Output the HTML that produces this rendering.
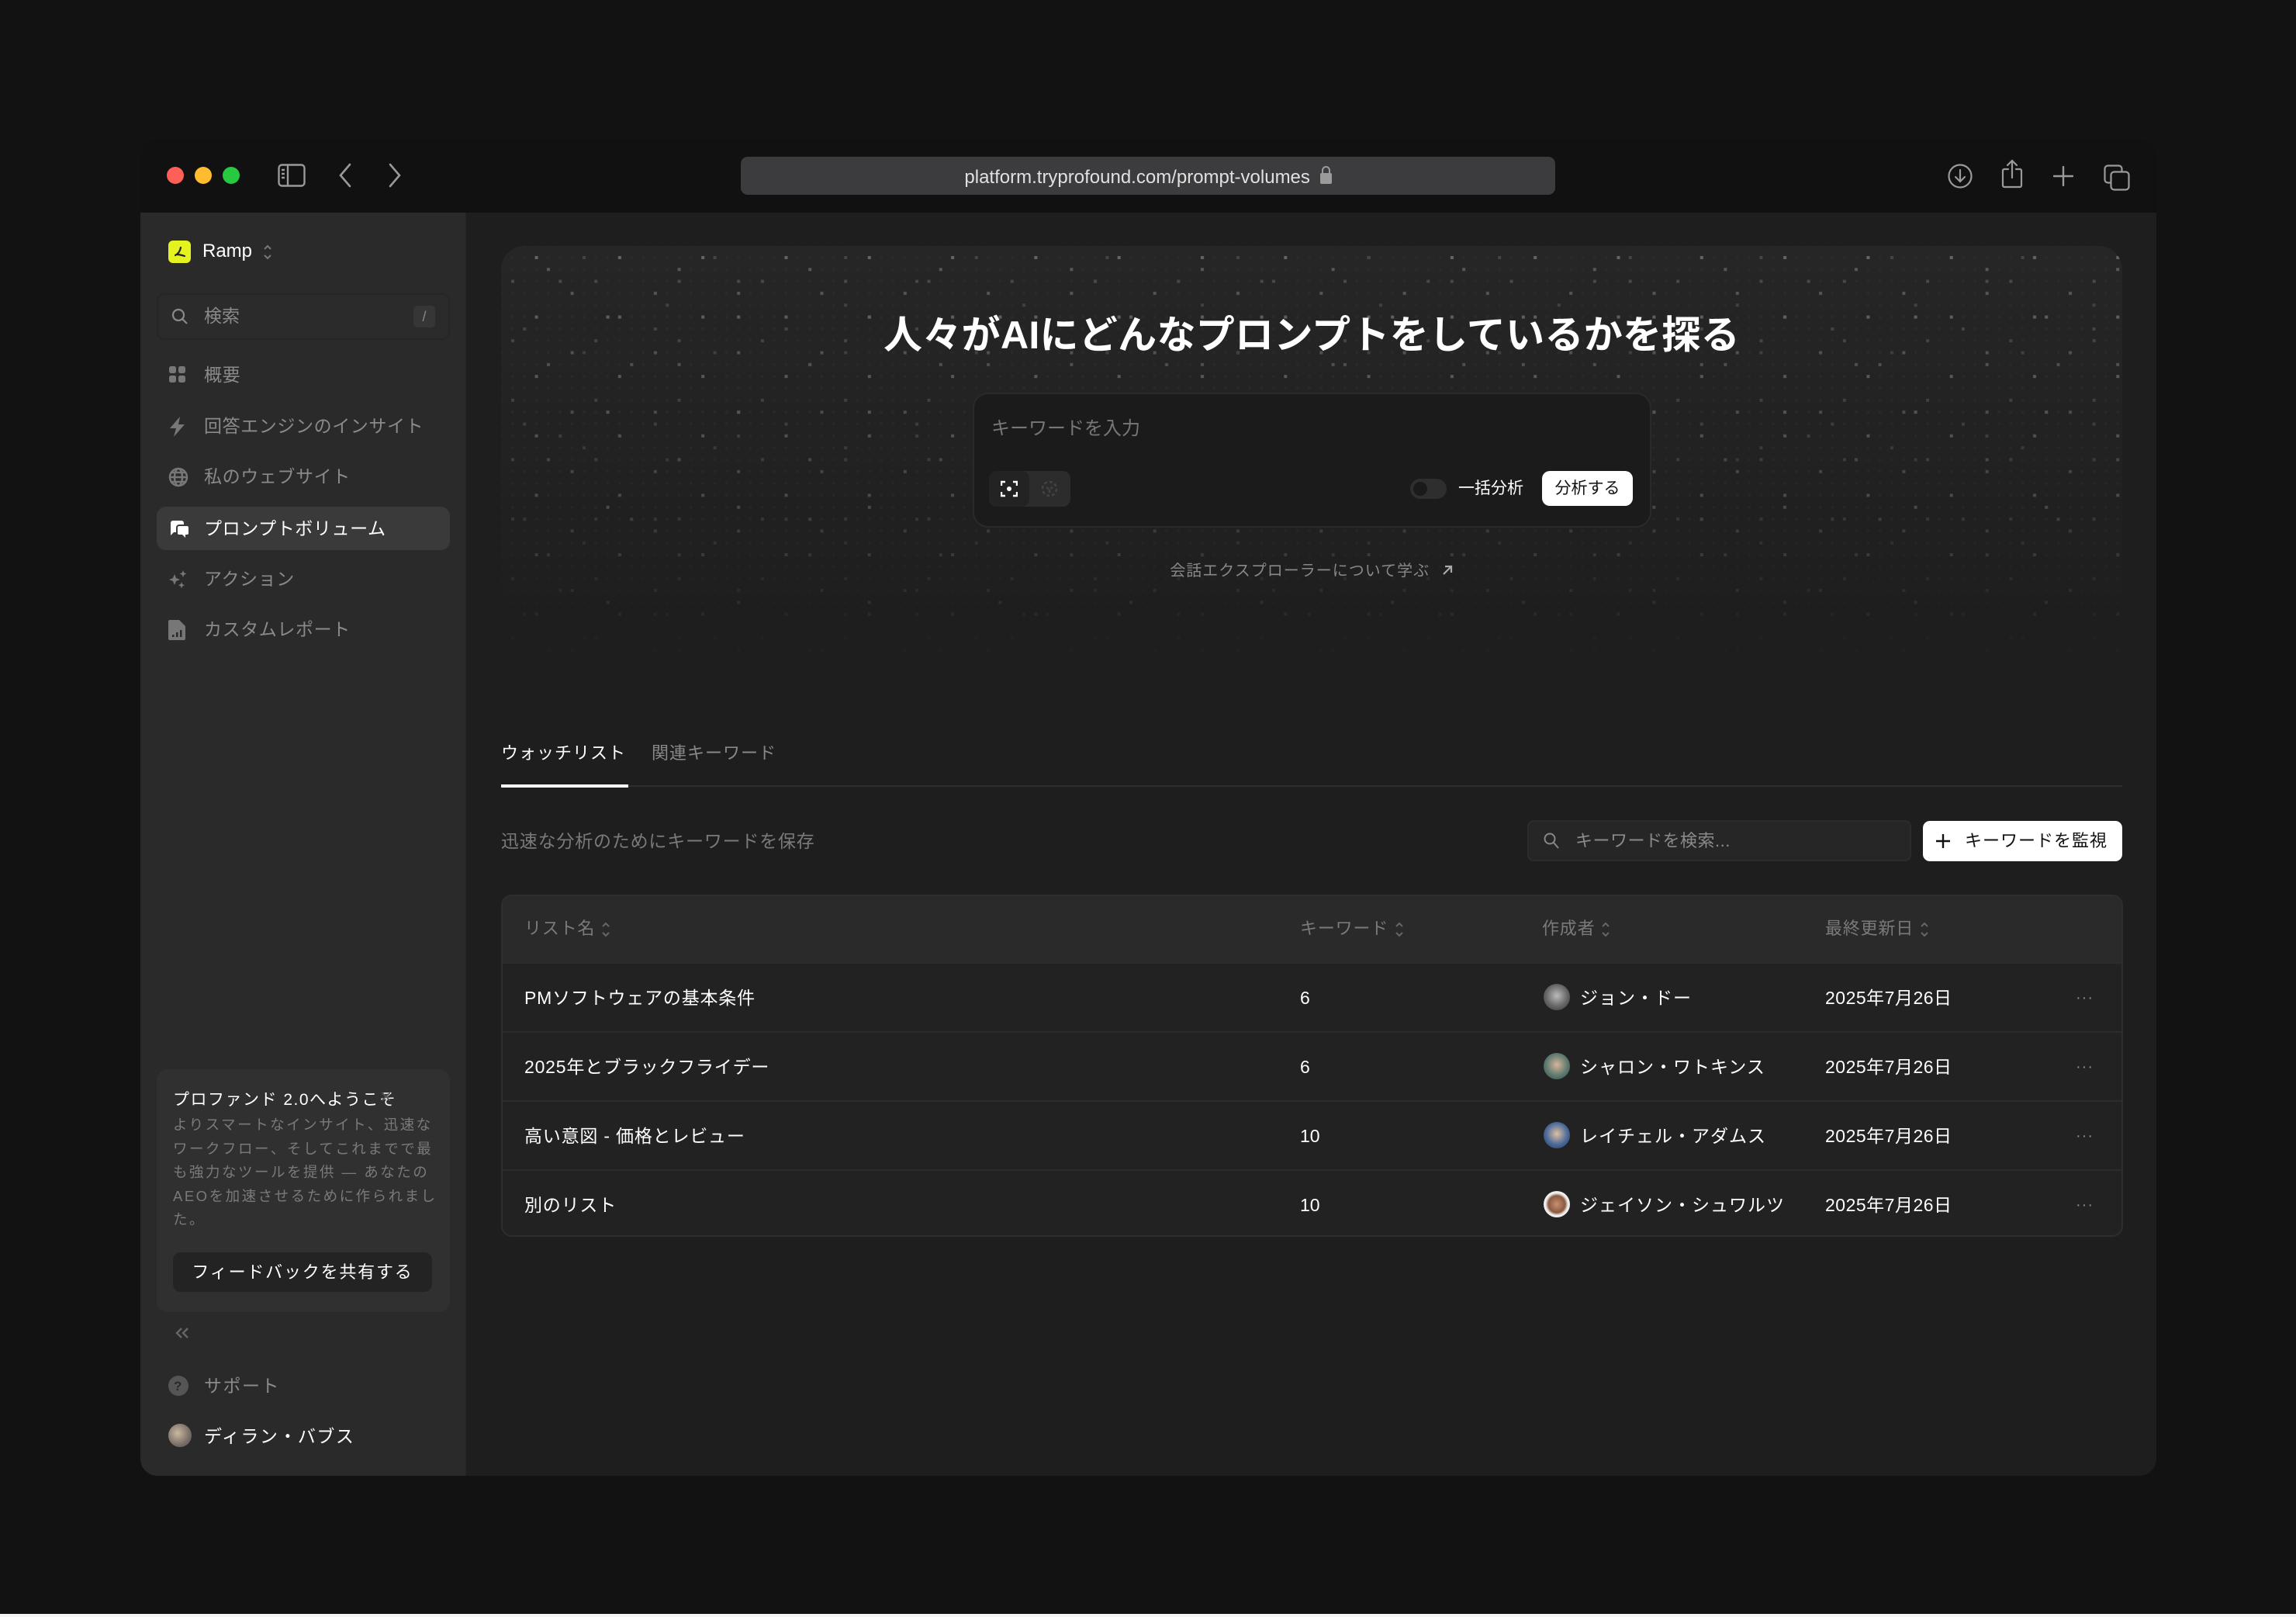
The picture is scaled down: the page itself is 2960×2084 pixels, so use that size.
<!DOCTYPE html>
<html><head><meta charset="utf-8">
<style>
*{margin:0;padding:0;box-sizing:border-box}
body{width:2960px;height:2084px;background:#121212;position:relative;overflow:hidden;font-family:"Liberation Sans","Noto Sans CJK JP",sans-serif;color:#fff}
.a{position:absolute}
.win{left:181px;top:179px;width:2599px;height:1723px;border-radius:22px;overflow:hidden;background:#1e1e1e}
.tb{left:0;top:0;width:2599px;height:95px;background:#111}
.side{left:0;top:95px;width:420px;height:1628px;background:#2a2a2a;border-right:1px solid #252525}
.nav{position:absolute;left:51px;font-size:23px;letter-spacing:.6px;color:#8a8a8a;line-height:30px;white-space:nowrap}
.nav svg{position:absolute;left:-16px;top:3px}
.t{font-size:23px;line-height:30px;white-space:nowrap}
.row{position:absolute;left:0;width:2089px;height:89px;border-top:2px solid #2c2c2c;background:#222}
.row .t{position:absolute;top:29px}
.av{position:absolute;top:26px;width:34px;height:34px;border-radius:50%}
.dots{position:absolute;top:33px;color:#888;font-size:20px;letter-spacing:1px}
.srt{display:inline-block;vertical-align:middle;margin-left:8px}
</style></head><body>
<div class="a win">
 <div class="a tb">
  <div class="a" style="left:34px;top:36px;width:22px;height:22px;border-radius:50%;background:#fe5f57"></div>
  <div class="a" style="left:70px;top:36px;width:22px;height:22px;border-radius:50%;background:#febc2e"></div>
  <div class="a" style="left:106px;top:36px;width:22px;height:22px;border-radius:50%;background:#28c840"></div>
  <svg class="a" style="left:177px;top:32px" width="36" height="30" viewBox="0 0 36 30" fill="none" stroke="#9a9a9a" stroke-width="2.4"><rect x="1.5" y="1.5" width="33" height="27" rx="4"/><line x1="13" y1="2" x2="13" y2="28"/><line x1="5" y1="8" x2="9" y2="8"/><line x1="5" y1="13" x2="9" y2="13"/><line x1="5" y1="18" x2="9" y2="18"/></svg>
  <svg class="a" style="left:254px;top:30px" width="20" height="34" viewBox="0 0 20 34" fill="none" stroke="#9a9a9a" stroke-width="2.6" stroke-linecap="round"><path d="M16 3 L4 17 L16 31"/></svg>
  <svg class="a" style="left:318px;top:30px" width="20" height="34" viewBox="0 0 20 34" fill="none" stroke="#9a9a9a" stroke-width="2.6" stroke-linecap="round"><path d="M4 3 L16 17 L4 31"/></svg>
  <div class="a" style="left:774px;top:23px;width:1050px;height:49px;border-radius:9px;background:#3c3c3e"></div>
  <div class="a" style="left:774px;top:25px;width:1050px;height:49px;line-height:49px;text-align:center;font-size:24px;color:#e0e0e0;font-family:'Liberation Sans',sans-serif">platform.tryprofound.com/prompt-volumes <span style="display:inline-block;width:15px;height:14px;background:#9a9a9a;border-radius:2px;vertical-align:-1px;position:relative;margin-left:6px"><span style="position:absolute;left:2px;top:-9px;width:11px;height:11px;border:2.5px solid #9a9a9a;border-bottom:none;border-radius:6px 6px 0 0"></span></span></div>
  <svg class="a" style="left:2330px;top:32px" width="32" height="32" viewBox="0 0 32 32" fill="none" stroke="#9a9a9a" stroke-width="2.2" stroke-linecap="round"><circle cx="16" cy="16" r="14.5"/><path d="M16 8v15M10 17l6 6 6-6"/></svg>
  <svg class="a" style="left:2399px;top:26px" width="28" height="38" viewBox="0 0 28 38" fill="none" stroke="#9a9a9a" stroke-width="2.2" stroke-linecap="round"><path d="M9 13H4a2 2 0 0 0-2 2v19a2 2 0 0 0 2 2h20a2 2 0 0 0 2-2V15a2 2 0 0 0-2-2h-5"/><path d="M14 2v22M8 8l6-6 6 6"/></svg>
  <svg class="a" style="left:2466px;top:35px" width="26" height="26" viewBox="0 0 26 26" stroke="#9a9a9a" stroke-width="2.4" stroke-linecap="round"><path d="M13 1v24M1 13h24"/></svg>
  <svg class="a" style="left:2531px;top:33px" width="34" height="34" viewBox="0 0 34 34" fill="none" stroke="#9a9a9a" stroke-width="2.2"><rect x="1.5" y="1.5" width="22" height="22" rx="4"/><rect x="9.5" y="9.5" width="23" height="23" rx="4" fill="#111"/></svg>
 </div>

 <div class="a side">
  <div class="a" style="left:36px;top:36px;width:29px;height:29px;border-radius:6px;background:#e4f21f"></div>
  <svg class="a" style="left:40px;top:40px" width="22" height="22" viewBox="0 0 22 22" fill="none" stroke="#222" stroke-width="2.2" stroke-linecap="round"><path d="M12 5 C11 10 9 13 5 15 M7 14 C11 14 14 15 17 16"/></svg>
  <div class="a t" style="left:80px;top:35px;font-size:24px">Ramp</div>
  <svg class="a" style="left:157px;top:38px" width="14" height="26" viewBox="0 0 14 26" fill="none" stroke="#777" stroke-width="2"><path d="M3 9l4-4 4 4M3 17l4 4 4-4"/></svg>
  <div class="a" style="left:21px;top:104px;width:378px;height:60px;border-radius:10px;border:2px solid #262626;background:#2b2b2b"></div>
  <svg class="a" style="left:40px;top:123px" width="22" height="22" viewBox="0 0 22 22" fill="none" stroke="#8a8a8a" stroke-width="2.2"><circle cx="9" cy="9" r="7"/><path d="M14 14l6 6"/></svg>
  <div class="a t" style="left:82px;top:118px;color:#8a8a8a">検索</div>
  <div class="a" style="left:352px;top:120px;width:28px;height:28px;border-radius:5px;background:#363636;color:#888;font-size:18px;text-align:center;line-height:28px">/</div>

  <div class="nav" style="top:194px;left:82px"><svg style="left:-46px" width="24" height="24" viewBox="0 0 24 24" fill="#777"><rect x="1" y="1" width="9" height="9" rx="2.5"/><rect x="13" y="1" width="9" height="9" rx="2.5"/><rect x="1" y="13" width="9" height="9" rx="2.5"/><rect x="13" y="13" width="9" height="9" rx="2.5"/></svg>概要</div>
  <div class="nav" style="top:260px;left:82px"><svg style="left:-46px" width="24" height="26" viewBox="0 0 24 26" fill="#777"><path d="M15 0L2 15h8l-3 11 14-16h-8z"/></svg>回答エンジンのインサイト</div>
  <div class="nav" style="top:325px;left:82px"><svg style="left:-46px" width="26" height="26" viewBox="0 0 26 26" fill="none" stroke="#777" stroke-width="2.5"><circle cx="13" cy="13" r="11"/><ellipse cx="13" cy="13" rx="5" ry="11"/><path d="M2 13h22M4 7h18M4 19h18"/></svg>私のウェブサイト</div>
  <div class="a" style="left:21px;top:379px;width:378px;height:56px;border-radius:12px;background:#3a3a3a"></div>
  <div class="nav" style="top:392px;left:82px;color:#fff"><svg style="left:-46px" width="28" height="26" viewBox="0 0 28 26" fill="#fff"><path d="M3 2h14a3 3 0 0 1 3 3v2h-6a4 4 0 0 0-4 4v6H7l-4 4V5a3 3 0 0 1 3-3z"/><path d="M14 9h10a2 2 0 0 1 2 2v7a2 2 0 0 1-2 2h-2v4l-4-4h-4a2 2 0 0 1-2-2v-7a2 2 0 0 1 2-2z"/></svg>プロンプトボリューム</div>
  <div class="nav" style="top:457px;left:82px"><svg style="left:-46px" width="26" height="26" viewBox="0 0 26 26" fill="#777"><path d="M8 6l2 5 5 2-5 2-2 5-2-5-5-2 5-2z"/><path d="M19 1l1.3 3.2 3.2 1.3-3.2 1.3L19 10l-1.3-3.2L14.5 5.5l3.2-1.3z"/><path d="M17 16l1.2 3 3 1.2-3 1.2-1.2 3-1.2-3-3-1.2 3-1.2z"/></svg>アクション</div>
  <div class="nav" style="top:522px;left:82px"><svg style="left:-46px" width="22" height="26" viewBox="0 0 22 26" fill="#777"><path d="M2 0h12l8 8v16a2 2 0 0 1-2 2H2a2 2 0 0 1-2-2V2a2 2 0 0 1 2-2z"/><rect x="5" y="19" width="2.5" height="3" fill="#2a2a2a"/><rect x="10" y="16" width="2.5" height="6" fill="#2a2a2a"/><rect x="15" y="13" width="2.5" height="9" fill="#2a2a2a"/></svg>カスタムレポート</div>

  <div class="a" style="left:21px;top:1104px;width:378px;height:313px;border-radius:14px;background:#303030"></div>
  <div class="a" style="left:42px;top:1130px;font-size:21px;letter-spacing:1.5px;color:#fff;line-height:28px;white-space:nowrap">プロファンド 2.0へようこそ</div>
  <div class="a" style="left:309px;top:1124px;font-size:26px;color:#555">×</div>
  <div class="a" style="left:42px;top:1161px;width:345px;font-size:18.5px;letter-spacing:2.5px;color:#7a7a7a;line-height:30.5px;word-break:break-all">よりスマートなインサイト、迅速なワークフロー、そしてこれまでで最も強力なツールを提供 — あなたのAEOを加速させるために作られました。</div>
  <div class="a" style="left:42px;top:1340px;width:334px;height:51px;border-radius:10px;background:#232323;text-align:center;line-height:51px;font-size:22px;letter-spacing:1.8px">フィードバックを共有する</div>
  <svg class="a" style="left:43px;top:1435px" width="22" height="18" viewBox="0 0 22 18" fill="none" stroke="#666" stroke-width="2.4"><path d="M10 3L4 9l6 6M18 3l-6 6 6 6"/></svg>
  <div class="nav" style="top:1497px;left:82px;letter-spacing:1.5px"><svg style="left:-46px;top:2px" width="26" height="26" viewBox="0 0 26 26"><circle cx="13" cy="13" r="13" fill="#555"/><text x="13" y="19" text-anchor="middle" font-size="17" font-weight="bold" fill="#2a2a2a" font-family="Liberation Sans">?</text></svg>サポート</div>
  <div class="a" style="left:36px;top:1561px;width:30px;height:30px;border-radius:50%;background:radial-gradient(circle at 40% 40%,#c9b9a0,#7a6f66 60%,#4a4f5a)"></div>
  <div class="nav" style="top:1562px;left:82px;color:#fff;letter-spacing:1.5px">ディラン・バブス</div>
 </div>

 <!-- hero -->
 <div class="a" style="left:465px;top:138px;width:2090px;height:540px;border-radius:30px;overflow:hidden;background:linear-gradient(#262626,#1e1e1e 90%)">
  <svg class="a" style="left:0;top:0" width="2090" height="540">
   <defs>
    <pattern id="p1" x="13" y="13" width="15.33" height="15.33" patternUnits="userSpaceOnUse"><rect width="3.5" height="3.5" fill="#2b2b2b"/></pattern>
    <pattern id="p2" x="13" y="13" width="107.3" height="76.6" patternUnits="userSpaceOnUse"><rect x="30.6" y="0" width="4" height="4" fill="#666"/><rect x="76.6" y="46" width="4" height="4" fill="#5a5a5a"/><rect x="0" y="30.6" width="4" height="4" fill="#4a4a4a"/></pattern>
    <pattern id="p3" x="13" y="13" width="168.6" height="122.6" patternUnits="userSpaceOnUse"><rect x="46" y="15.3" width="4" height="4" fill="#5a5a5a"/><rect x="122.6" y="76.6" width="4" height="4" fill="#666"/><rect x="15.3" y="92" width="4" height="4" fill="#4a4a4a"/><rect x="92" y="0" width="4" height="4" fill="#454545"/></pattern>
    <pattern id="p4" x="13" y="13" width="229.9" height="199.3" patternUnits="userSpaceOnUse"><rect x="61.3" y="30.6" width="4" height="4" fill="#4a4a4a"/><rect x="153.3" y="138" width="4" height="4" fill="#5a5a5a"/><rect x="199.3" y="61.3" width="4" height="4" fill="#444"/></pattern>
    <linearGradient id="fd" x1="0" y1="0" x2="0" y2="1"><stop offset="0" stop-color="#fff"/><stop offset=".6" stop-color="#999"/><stop offset="1" stop-color="#000"/></linearGradient>
    <mask id="m"><rect width="2090" height="540" fill="url(#fd)"/></mask>
   </defs>
   <g mask="url(#m)">
    <rect width="2090" height="540" fill="url(#p1)"/>
    <rect width="2090" height="540" fill="url(#p2)"/>
    <rect width="2090" height="540" fill="url(#p3)"/>
    <rect width="2090" height="540" fill="url(#p4)"/>
   </g>
  </svg>
 </div>
 <div class="a" style="left:465px;top:218px;width:2090px;text-align:center;font-size:50px;font-weight:bold;line-height:70px;letter-spacing:.3px">人々がAIにどんなプロンプトをしているかを探る</div>
 <div class="a" style="left:1073px;top:327px;width:875px;height:174px;border-radius:20px;background:#1b1b1b;border:2px solid #2a2a2a"></div>
 <div class="a t" style="left:1097px;top:359px;color:#777;font-size:24px">キーワードを入力</div>
 <div class="a" style="left:1094px;top:428px;width:105px;height:46px;border-radius:10px;background:#2c2c2c"></div>
 <div class="a" style="left:1094px;top:428px;width:52px;height:46px;border-radius:10px;background:#232323"></div>
 <svg class="a" style="left:1109px;top:440px" width="22" height="22" viewBox="0 0 22 22" fill="none" stroke="#fff" stroke-width="2.4"><path d="M1 7V2h5M16 2h5v5M21 15v5h-5M6 20H1v-5"/><circle cx="11" cy="11" r="3" fill="#fff" stroke="none"/></svg>
 <svg class="a" style="left:1161px;top:440px" width="22" height="22" viewBox="0 0 22 22" fill="none" stroke="#444" stroke-width="2.4" stroke-dasharray="4 3"><circle cx="11" cy="11" r="9"/><path d="M7 9l4 3 4-3M11 12v5"/></svg>
 <div class="a" style="left:1637px;top:438px;width:47px;height:26px;border-radius:13px;background:#2e2e2e"></div>
 <div class="a" style="left:1641px;top:442px;width:18px;height:18px;border-radius:50%;background:#1a1a1a"></div>
 <div class="a t" style="left:1699px;top:436px;font-size:21px">一括分析</div>
 <div class="a" style="left:1807px;top:428px;width:117px;height:45px;border-radius:10px;background:#fff;color:#111;text-align:center;line-height:45px;font-size:21px">分析する</div>
 <div class="a" style="left:465px;top:542px;width:2090px;text-align:center;white-space:nowrap;font-size:20px;line-height:30px;color:#888;letter-spacing:1px">会話エクスプローラーについて学ぶ <svg style="vertical-align:-1px;margin-left:8px" width="16" height="16" viewBox="0 0 16 16" fill="none" stroke="#aaa" stroke-width="2.2"><path d="M3 13L13 3M5 3h8v8"/></svg></div>

 <!-- tabs -->
 <div class="a t" style="left:465px;top:777px;font-size:22px;letter-spacing:1px">ウォッチリスト</div>
 <div class="a t" style="left:659px;top:777px;font-size:22px;letter-spacing:1px;color:#888">関連キーワード</div>
 <div class="a" style="left:465px;top:833px;width:2090px;height:2px;background:#2e2e2e"></div>
 <div class="a" style="left:465px;top:832px;width:164px;height:4px;background:#fff"></div>

 <div class="a t" style="left:465px;top:890px;font-size:23px;color:#7a7a7a;letter-spacing:.8px">迅速な分析のためにキーワードを保存</div>
 <div class="a" style="left:1788px;top:878px;width:495px;height:53px;border-radius:8px;background:#262626;border:2px solid #2c2c2c"></div>
 <svg class="a" style="left:1809px;top:894px" width="20" height="22" viewBox="0 0 20 22" fill="none" stroke="#888" stroke-width="2"><circle cx="8" cy="8" r="6.5"/><path d="M13 13l6 7"/></svg>
 <div class="a t" style="left:1850px;top:890px;font-size:22px;color:#8a8a8a;letter-spacing:.5px">キーワードを検索...</div>
 <div class="a" style="left:2298px;top:879px;width:257px;height:52px;border-radius:9px;background:#fff"></div>
 <svg class="a" style="left:2314px;top:895px" width="20" height="20" viewBox="0 0 20 20" stroke="#111" stroke-width="2.4"><path d="M10 1v18M1 10h18"/></svg>
 <div class="a t" style="left:2352px;top:890px;font-size:22px;color:#111;letter-spacing:1px">キーワードを監視</div>

 <!-- table -->
 <div class="a" style="left:465px;top:974px;width:2091px;height:441px;border-radius:14px;border:2px solid #2e2e2e;overflow:hidden;background:#222">
  <div class="a" style="left:0;top:0;width:2091px;height:85px;background:#2a2a2a"></div>
  <div class="a t" style="left:28px;top:27px;color:#7a7a7a;font-size:22px;letter-spacing:.8px">リスト名<svg class="srt" width="12" height="22" viewBox="0 0 12 22" fill="none" stroke="#666" stroke-width="2"><path d="M2 7l4-4 4 4M2 15l4 4 4-4"/></svg></div>
  <div class="a t" style="left:1028px;top:27px;color:#7a7a7a;font-size:22px;letter-spacing:.8px">キーワード<svg class="srt" width="12" height="22" viewBox="0 0 12 22" fill="none" stroke="#666" stroke-width="2"><path d="M2 7l4-4 4 4M2 15l4 4 4-4"/></svg></div>
  <div class="a t" style="left:1340px;top:27px;color:#7a7a7a;font-size:22px;letter-spacing:.8px">作成者<svg class="srt" width="12" height="22" viewBox="0 0 12 22" fill="none" stroke="#666" stroke-width="2"><path d="M2 7l4-4 4 4M2 15l4 4 4-4"/></svg></div>
  <div class="a t" style="left:1705px;top:27px;color:#7a7a7a;font-size:22px;letter-spacing:.8px">最終更新日<svg class="srt" width="12" height="22" viewBox="0 0 12 22" fill="none" stroke="#666" stroke-width="2"><path d="M2 7l4-4 4 4M2 15l4 4 4-4"/></svg></div>
  <div class="row" style="top:85px"><div class="t" style="left:28px;letter-spacing:.8px">PMソフトウェアの基本条件</div><div class="t" style="left:1028px">6</div><div class="av" style="left:1342px;background:radial-gradient(circle at 50% 45%,#bbb,#666 55%,#333)"></div><div class="t" style="left:1389px;letter-spacing:1px">ジョン・ドー</div><div class="t" style="left:1705px;letter-spacing:.5px">2025年7月26日</div><div class="dots" style="left:2028px">···</div></div>
  <div class="row" style="top:174px"><div class="t" style="left:28px;letter-spacing:.8px">2025年とブラックフライデー</div><div class="t" style="left:1028px">6</div><div class="av" style="left:1342px;background:radial-gradient(circle at 50% 45%,#d8b49a,#5f7a6f 55%,#2f4a44)"></div><div class="t" style="left:1389px;letter-spacing:1px">シャロン・ワトキンス</div><div class="t" style="left:1705px;letter-spacing:.5px">2025年7月26日</div><div class="dots" style="left:2028px">···</div></div>
  <div class="row" style="top:263px"><div class="t" style="left:28px;letter-spacing:.8px">高い意図 - 価格とレビュー</div><div class="t" style="left:1028px">10</div><div class="av" style="left:1342px;background:radial-gradient(circle at 50% 45%,#e0c0a0,#4c6a9a 55%,#24365a)"></div><div class="t" style="left:1389px;letter-spacing:1px">レイチェル・アダムス</div><div class="t" style="left:1705px;letter-spacing:.5px">2025年7月26日</div><div class="dots" style="left:2028px">···</div></div>
  <div class="row" style="top:352px"><div class="t" style="left:28px;letter-spacing:.8px">別のリスト</div><div class="t" style="left:1028px">10</div><div class="av" style="left:1342px;background:radial-gradient(circle at 50% 50%,#c89070,#8a5a40 45%,#eee 60%)"></div><div class="t" style="left:1389px;letter-spacing:1px">ジェイソン・シュワルツ</div><div class="t" style="left:1705px;letter-spacing:.5px">2025年7月26日</div><div class="dots" style="left:2028px">···</div></div>
 </div>
</div>
<div class="a" style="left:0;top:2080px;width:2960px;height:4px;background:#f5f5f5"></div>
</body></html>
